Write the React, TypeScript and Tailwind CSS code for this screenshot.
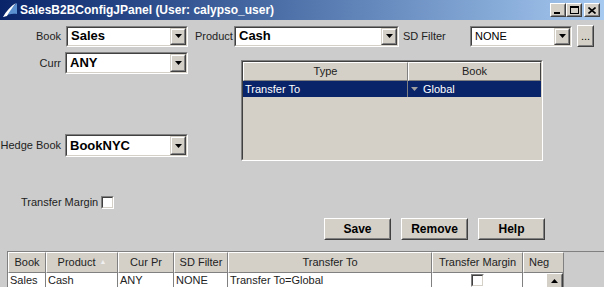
import React from "react";

const font = { fontFamily: '"Liberation Sans", Arial, sans-serif' };

function Arrow({ color = "#000", up = false }: { color?: string; up?: boolean }) {
  return (
    <svg width="7" height="4" viewBox="0 0 7 4">
      <path d={up ? "M0 4h7L3.5 0z" : "M0 0h7L3.5 4z"} fill={color} />
    </svg>
  );
}

function Combo({ value, width, bold = true, height = 21 }: { value: string; width: number; bold?: boolean; height?: number }) {
  return (
    <div
      className="flex border border-t-[#808080] border-l-[#808080] border-b-white border-r-white"
      style={{ width, height }}
    >
      <div className="flex flex-1 min-w-0 border border-t-[#404040] border-l-[#404040] border-b-[#d4d0c8] border-r-[#d4d0c8] bg-white">
        <div
          className={`flex-1 min-w-0 flex items-center pl-[3px] text-black ${bold ? "font-bold text-[13px]" : "text-[11px]"}`}
        >
          {value}
        </div>
        <div className="w-[16px] flex border border-t-[#d4d0c8] border-l-[#d4d0c8] border-b-[#404040] border-r-[#404040]">
          <div className="flex-1 flex items-center justify-center bg-[#d4d0c8] border border-t-white border-l-white border-b-[#808080] border-r-[#808080]">
            <Arrow />
          </div>
        </div>
      </div>
    </div>
  );
}

function Button({
  label,
  width,
  height = 22,
  bold = true,
  children,
}: {
  label: string;
  width: number;
  height?: number;
  bold?: boolean;
  children?: React.ReactNode;
}) {
  return (
    <div
      className="flex border border-t-white border-l-white border-b-[#404040] border-r-[#404040]"
      style={{ width, height }}
    >
      <div
        className={`flex-1 flex items-center justify-center bg-[#d4d0c8] border border-t-[#d4d0c8] border-l-[#d4d0c8] border-b-[#808080] border-r-[#808080] text-black ${bold ? "font-bold text-[12px]" : "text-[11px]"}`}
      >
        {label}
        {children}
      </div>
    </div>
  );
}

function WinButton({ children }: { children: React.ReactNode }) {
  return (
    <div className="w-[16px] h-[14px] flex border border-t-white border-l-white border-b-[#404040] border-r-[#404040]">
      <div className="flex-1 flex items-center justify-center bg-[#d4d0c8] border border-t-[#d4d0c8] border-l-[#d4d0c8] border-b-[#808080] border-r-[#808080]">
        {children}
      </div>
    </div>
  );
}

const columns = [
  { name: "Book", w: 38 },
  { name: "Product", w: 72 },
  { name: "Cur Pr", w: 56 },
  { name: "SD Filter", w: 54 },
  { name: "Transfer To", w: 204 },
  { name: "Transfer Margin", w: 91 },
  { name: "Neg", w: 41 },
];

const row = ["Sales", "Cash", "ANY", "NONE", "Transfer To=Global", "", ""];

export default function App() {
  return (
    <div className="w-[604px] h-[287px] overflow-hidden bg-[#cccccc] flex flex-col text-[11px] text-[#222]" style={font}>
      {/* title bar */}
      <div className="h-[20px] shrink-0 flex items-center bg-gradient-to-r from-[#0a246a] to-[#a6caf0]">
        <svg width="16" height="16" viewBox="0 0 16 16" className="ml-[2px]">
          <path d="M1 15 C5 10 10 5 15 1 L15 12 C11 11 6 12 1 15z" fill="#5a8fd0" />
          <path d="M1 15 C4 9 9 4 14 1 C10 6 7 10 5 14z" fill="#ffffff" />
        </svg>
        <span className="ml-[2px] text-white font-bold text-[12px]">
          SalesB2BConfigJPanel (User: calypso_user)
        </span>
        <div className="ml-auto mr-[4px] flex items-center">
          <WinButton>
            <div className="w-[6px] h-[2px] bg-black mt-[6px] -ml-[2px]" />
          </WinButton>
          <WinButton>
            <div className="w-[9px] h-[8px] border border-black border-t-2" />
          </WinButton>
          <div className="ml-[2px]">
            <WinButton>
              <svg width="8" height="7" viewBox="0 0 8 7">
                <path d="M0.5 0.5L7.5 6.5M7.5 0.5L0.5 6.5" stroke="#000" strokeWidth="1.6" />
              </svg>
            </WinButton>
          </div>
        </div>
      </div>

      {/* row 1 */}
      <div className="mt-[5px] h-[22px] flex items-center">
        <div className="w-[61px] text-right">Book</div>
        <div className="ml-[5px]">
          <Combo value="Sales" width={122} />
        </div>
        <div className="ml-[7px] w-[38px]">Product</div>
        <div className="ml-[1px]">
          <Combo value="Cash" width={165} />
        </div>
        <div className="ml-[4px] w-[60px]">SD Filter</div>
        <div className="ml-[7px]">
          <Combo value="NONE" width={102} bold={false} />
        </div>
        <div className="ml-[5px]">
          <Button label="..." width={17} bold={false} />
        </div>
      </div>

      {/* middle */}
      <div className="flex">
        <div className="w-[241px] flex flex-col">
          <div className="mt-[5px] h-[22px] flex items-center">
            <div className="w-[61px] text-right">Curr</div>
            <div className="ml-[4px]">
              <Combo value="ANY" width={123} height={22} />
            </div>
          </div>
          <div className="mt-[60px] h-[23px] flex items-center">
            <div className="w-[61px] text-right">Hedge Book</div>
            <div className="ml-[4px]">
              <Combo value="BookNYC" width={123} height={23} />
            </div>
          </div>
        </div>
        <div className="mt-[13px] w-[302px] h-[101px] flex border border-t-[#808080] border-l-[#808080] border-b-white border-r-white">
          <div className="flex-1 flex flex-col bg-[#d4d0c8] border border-t-[#404040] border-l-[#404040] border-b-[#d4d0c8] border-r-[#d4d0c8]">
            <div className="h-[19px] flex">
              <div className="w-[165px] flex items-center justify-center border border-t-white border-l-white border-b-[#808080] border-r-[#808080]">
                Type
              </div>
              <div className="flex-1 flex items-center justify-center border border-t-white border-l-white border-b-[#808080] border-r-[#404040]">
                Book
              </div>
            </div>
            <div className="h-[16px] flex bg-[#0a246a] text-white">
              <div className="w-[165px] pl-[2px] flex items-center border-r border-[#808080]">Transfer To</div>
              <div className="flex-1 flex items-center pl-[3px]">
                <Arrow color="#a0a0a0" />
                <span className="ml-[5px]">Global</span>
              </div>
            </div>
          </div>
        </div>
      </div>

      {/* transfer margin */}
      <div className="mt-[35px] h-[13px] flex items-center">
        <div className="ml-[21px] w-[80px]">Transfer Margin</div>
        <div className="w-[13px] h-[13px] flex border border-t-[#808080] border-l-[#808080] border-b-white border-r-white">
          <div className="flex-1 bg-white border border-t-[#404040] border-l-[#404040] border-b-[#d4d0c8] border-r-[#d4d0c8]" />
        </div>
      </div>

      {/* buttons */}
      <div className="mt-[9px] h-[22px] flex gap-[10px] pl-[324px]">
        <Button label="Save" width={67} />
        <Button label="Remove" width={67} />
        <Button label="Help" width={67} />
      </div>

      {/* bottom table */}
      <div className="mt-[11px] ml-[7px] flex flex-col border-l border-t border-[#808080]">
        <div className="h-[21px] flex">
          {columns.map((c, i) => (
            <div
              key={c.name}
              className={`flex items-center bg-[#d4d0c8] border border-t-white border-l-white border-b-[#808080] border-r-[#808080] ${i === 6 ? "pl-[5px]" : "justify-center"}`}
              style={{ width: c.w }}
            >
              {c.name}
              {i === 1 && <span className="ml-[4px] text-[7px] text-[#f0f0f0]">▲</span>}
            </div>
          ))}
        </div>
        <div className="h-[16px] flex">
          {columns.map((c, i) => (
            <div
              key={c.name}
              className={`flex items-center bg-white border-r border-b border-[#808080] ${i === 5 ? "justify-center" : "pl-[2px]"}`}
              style={{ width: c.w }}
            >
              {row[i]}
              {i === 5 && (
                <div className="w-[13px] h-[13px] flex border border-t-[#808080] border-l-[#808080] border-b-white border-r-white">
                  <div className="flex-1 bg-white border border-t-[#404040] border-l-[#404040] border-b-[#d4d0c8] border-r-[#d4d0c8]" />
                </div>
              )}
              {i === 6 && (
                <div className="ml-auto">
                  <Button label="" width={17} height={16} bold={false}>
                    <Arrow up />
                  </Button>
                </div>
              )}
            </div>
          ))}
        </div>
      </div>
    </div>
  );
}
